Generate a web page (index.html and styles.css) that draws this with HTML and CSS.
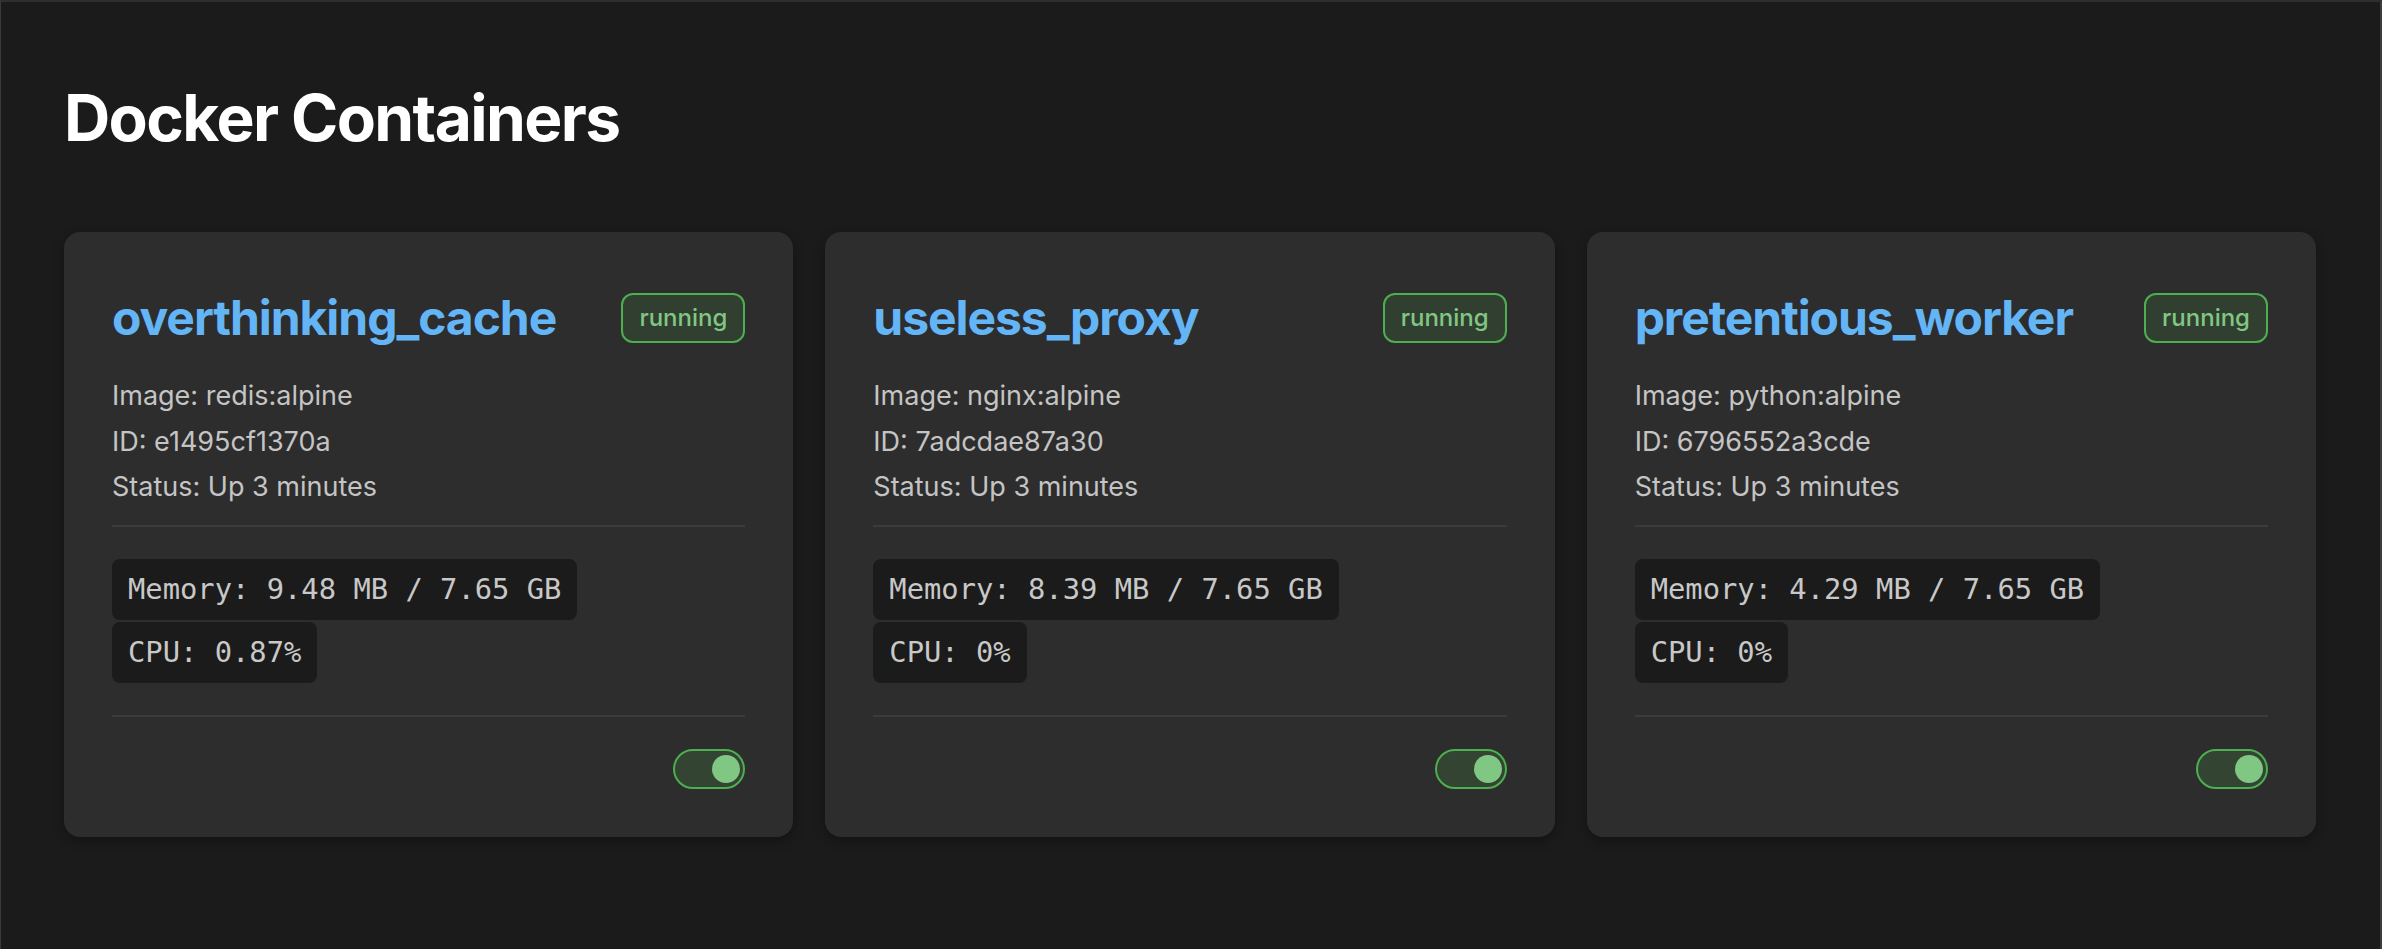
FILE: index.html
```html
<!DOCTYPE html>
<html lang="en">
<head>
<meta charset="utf-8">
<title>Docker Containers</title>
<link rel="stylesheet" href="styles.css">
</head>
<body>
<main class="page">
  <h1 class="page-title">Docker Containers</h1>
  <section class="grid">
    <article class="card">
      <header class="card-header">
        <h2 class="card-title">overthinking_cache</h2>
        <span class="badge">running</span>
      </header>
      <div class="info">
        <p>Image: redis:alpine</p>
        <p>ID: e1495cf1370a</p>
        <p>Status: Up 3 minutes</p>
      </div>
      <div class="stats">
        <code class="stat">Memory: 9.48 MB / 7.65 GB</code>
        <code class="stat">CPU: 0.87%</code>
      </div>
      <div class="actions">
        <span class="toggle"><span class="knob"></span></span>
      </div>
    </article>
    <article class="card">
      <header class="card-header">
        <h2 class="card-title">useless_proxy</h2>
        <span class="badge">running</span>
      </header>
      <div class="info">
        <p>Image: nginx:alpine</p>
        <p>ID: 7adcdae87a30</p>
        <p>Status: Up 3 minutes</p>
      </div>
      <div class="stats">
        <code class="stat">Memory: 8.39 MB / 7.65 GB</code>
        <code class="stat">CPU: 0%</code>
      </div>
      <div class="actions">
        <span class="toggle"><span class="knob"></span></span>
      </div>
    </article>
    <article class="card">
      <header class="card-header">
        <h2 class="card-title">pretentious_worker</h2>
        <span class="badge">running</span>
      </header>
      <div class="info">
        <p>Image: python:alpine</p>
        <p>ID: 6796552a3cde</p>
        <p>Status: Up 3 minutes</p>
      </div>
      <div class="stats">
        <code class="stat">Memory: 4.29 MB / 7.65 GB</code>
        <code class="stat">CPU: 0%</code>
      </div>
      <div class="actions">
        <span class="toggle"><span class="knob"></span></span>
      </div>
    </article>
  </section>
</main>
</body>
</html>
```
FILE: styles.css
```css
* { box-sizing: border-box; }

html, body {
  margin: 0;
  height: 100%;
}

body {
  background: #1b1b1b;
  font-family: Inter, "Liberation Sans", sans-serif;
  color: #c4c4c4;
  border-top: 2px solid #2f2f33;
  border-left: 1px solid #3a3a3a;
  border-right: 2px solid #3c3c3c;
  min-height: 949px;
}

.page {
  padding: 77px 64px 0 63px;
}

.page-title {
  margin: 0;
  font-size: 64px;
  line-height: 77px;
  font-weight: 700;
  color: #ffffff;
  letter-spacing: -0.025em;
}

.grid {
  margin-top: 76px;
  display: grid;
  grid-template-columns: repeat(3, 1fr);
  gap: 32px;
}

.card {
  background: #2d2d2d;
  border-radius: 16px;
  padding: 48px;
  box-shadow: 0 4px 12px rgba(0, 0, 0, 0.3);
  display: flex;
  flex-direction: column;
}

.card-header {
  display: flex;
  align-items: center;
  justify-content: space-between;
  min-height: 76px;
}

.card-title {
  margin: 0;
  font-size: 48px;
  line-height: 58px;
  font-weight: 700;
  color: #64b5f6;
  letter-spacing: -0.022em;
}

.badge {
  font-size: 24px;
  line-height: 30px;
  font-weight: 500;
  color: #81c784;
  background: rgba(76, 175, 80, 0.14);
  border: 2px solid #4caf50;
  border-radius: 12px;
  padding: 8px 16px;
}

.info {
  margin-top: 17px;
  padding-bottom: 15px;
  border-bottom: 2px solid #3b3b3b;
}

.info p {
  margin: 0;
  font-size: 27px;
  line-height: 45.5px;
  color: #c4c4c4;
}

.stats {
  display: flex;
  flex-direction: column;
  align-items: flex-start;
  gap: 2px;
  padding: 32px 0;
  border-bottom: 2px solid #3b3b3b;
}

.stat {
  font-family: "DejaVu Sans Mono", "Liberation Mono", monospace;
  font-size: 28.8px;
  line-height: 29px;
  color: #c8c8c8;
  background: #1b1b1b;
  border-radius: 8px;
  padding: 16px;
}

.actions {
  display: flex;
  justify-content: flex-end;
  padding-top: 32px;
}

.toggle {
  width: 72px;
  height: 40px;
  border: 2px solid #4caf50;
  border-radius: 20px;
  background: #334433;
  display: flex;
  align-items: center;
  justify-content: flex-end;
  padding: 0 3px;
}

.knob {
  width: 28px;
  height: 28px;
  border-radius: 50%;
  background: #81c784;
}
```
